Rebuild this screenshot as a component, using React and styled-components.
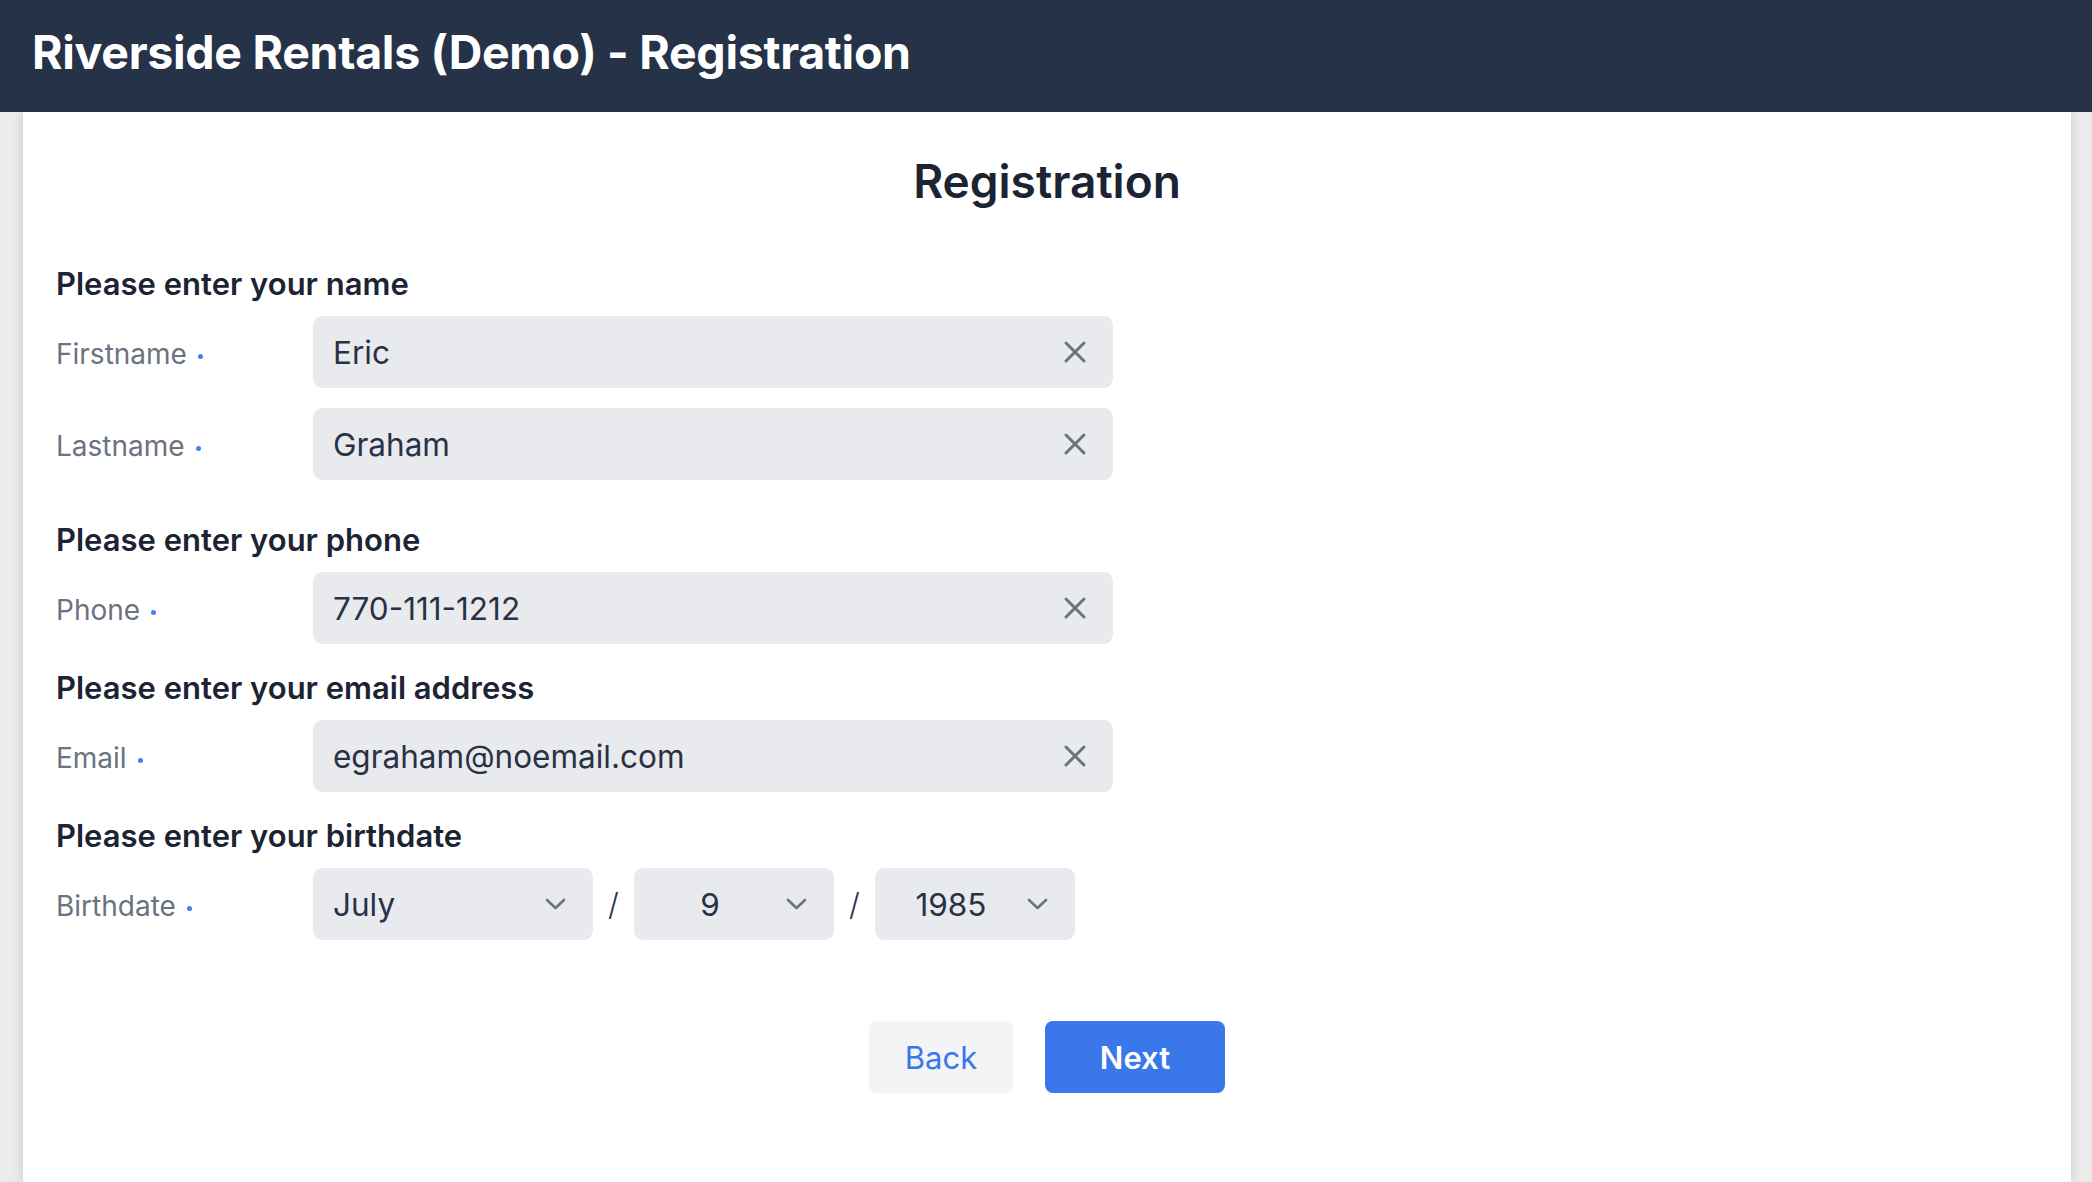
import React from 'react';
import styled, { createGlobalStyle } from 'styled-components';

const GlobalStyle = createGlobalStyle`
  body {
    margin: 0;
    background-color: #ebebec;
    font-family: Inter, "Noto Sans", sans-serif;
  }
`;

const TopBar = styled.header`
  height: 112px;
  box-sizing: border-box;
  background-color: #263248;
  display: flex;
  align-items: center;
  padding: 0 32px 8px;
`;

const AppTitle = styled.h1`
  margin: 0;
  color: #ffffff;
  font-size: 46.5px;
  font-weight: 700;
  letter-spacing: -0.3px;
`;

const Card = styled.main`
  background-color: #ffffff;
  margin: 0 21px 0 23px;
  min-height: calc(100vh - 112px);
  padding: 0 33px 60px;
  box-sizing: border-box;
  box-shadow: 0 0 10px rgba(40, 45, 60, 0.18);
`;

const PageTitle = styled.h2`
  margin: 0;
  padding-top: 43px;
  text-align: center;
  font-size: 46px;
  line-height: 53px;
  font-weight: 600;
  color: #1c2433;
`;

const Section = styled.section`
  margin-top: ${({ $top }) => $top}px;
`;

const SectionHeading = styled.h3`
  margin: 0 0 15px;
  font-size: 31px;
  line-height: 34px;
  font-weight: 600;
  color: #1c2433;
`;

const FieldRow = styled.div`
  display: flex;
  align-items: center;
  height: 72px;
  & + & {
    margin-top: 20px;
  }
`;

const Label = styled.div`
  width: 257px;
  flex-shrink: 0;
  display: flex;
  align-items: center;
  padding-top: 4px;
  font-size: 28px;
  color: #6b7280;
`;

const RequiredDot = styled.span`
  width: 5px;
  height: 5px;
  border-radius: 50%;
  background-color: #3b82f6;
  margin-left: 11px;
  margin-top: 4px;
`;

const InputBox = styled.div`
  width: 800px;
  height: 72px;
  box-sizing: border-box;
  background-color: #e9eaee;
  border-radius: 9px;
  display: flex;
  align-items: center;
  padding: 0 27px 0 20px;
`;

const TextInput = styled.input`
  flex: 1;
  border: none;
  outline: none;
  background: transparent;
  padding: 0;
  font-family: inherit;
  font-size: 31.5px;
  color: #283244;
`;

const ClearButton = styled.button`
  border: none;
  background: none;
  padding: 0;
  display: flex;
  cursor: pointer;
`;

const DateRow = styled.div`
  display: flex;
  align-items: center;
`;

const SelectBox = styled.div`
  width: ${({ $width }) => $width}px;
  height: 72px;
  box-sizing: border-box;
  background-color: #e9eaee;
  border-radius: 9px;
  display: flex;
  align-items: center;
  gap: 20px;
  padding: 0 27px 0 20px;
  cursor: pointer;
`;

const SelectValue = styled.span`
  flex: 1;
  text-align: ${({ $align }) => $align};
  font-size: 31.5px;
  color: #283244;
`;

const Slash = styled.span`
  width: 41px;
  text-align: center;
  font-size: 31px;
  font-weight: 300;
  color: #283244;
`;

const ButtonBar = styled.div`
  display: flex;
  justify-content: center;
  gap: 32px;
  margin-top: 81px;
`;

const Button = styled.button`
  height: 72px;
  min-width: ${({ $primary }) => ($primary ? 180 : 144)}px;
  border: none;
  border-radius: 8px;
  font-family: inherit;
  font-size: 31px;
  font-weight: ${({ $primary }) => ($primary ? 600 : 400)};
  background-color: ${({ $primary }) => ($primary ? '#3a77ea' : '#f3f4f6')};
  color: ${({ $primary }) => ($primary ? '#ffffff' : '#3a77ea')};
  cursor: pointer;
`;

const CloseIcon = () => (
  <svg width="22" height="22" viewBox="0 0 22 22">
    <path d="M2 2 L20 20 M20 2 L2 20" stroke="#6b7280" strokeWidth="3" strokeLinecap="round" />
  </svg>
);

const ChevronIcon = () => (
  <svg width="21" height="12" viewBox="0 0 21 12">
    <path d="M2 2 L10.5 10 L19 2" stroke="#6b7280" strokeWidth="2.6" fill="none" strokeLinecap="round" strokeLinejoin="round" />
  </svg>
);

const sections = [
  {
    heading: 'Please enter your name',
    top: 59,
    fields: [
      { label: 'Firstname', value: 'Eric' },
      { label: 'Lastname', value: 'Graham' },
    ],
  },
  {
    heading: 'Please enter your phone',
    top: 43,
    fields: [{ label: 'Phone', value: '770-111-1212' }],
  },
  {
    heading: 'Please enter your email address',
    top: 27,
    fields: [{ label: 'Email', value: 'egraham@noemail.com' }],
  },
];

const Select = ({ value, width, align }) => (
  <SelectBox $width={width}>
    <SelectValue $align={align}>{value}</SelectValue>
    <ChevronIcon />
  </SelectBox>
);

const App = () => {
  return (
    <>
      <GlobalStyle />
      <TopBar>
        <AppTitle>Riverside Rentals (Demo) - Registration</AppTitle>
      </TopBar>
      <Card>
        <PageTitle>Registration</PageTitle>
        {sections.map((section) => (
          <Section key={section.heading} $top={section.top}>
            <SectionHeading>{section.heading}</SectionHeading>
            {section.fields.map((field) => (
              <FieldRow key={field.label}>
                <Label>
                  {field.label}
                  <RequiredDot />
                </Label>
                <InputBox>
                  <TextInput defaultValue={field.value} />
                  <ClearButton aria-label="Clear">
                    <CloseIcon />
                  </ClearButton>
                </InputBox>
              </FieldRow>
            ))}
          </Section>
        ))}
        <Section $top={27}>
          <SectionHeading>Please enter your birthdate</SectionHeading>
          <FieldRow>
            <Label>
              Birthdate
              <RequiredDot />
            </Label>
            <DateRow>
              <Select value="July" width={280} align="left" />
              <Slash>/</Slash>
              <Select value="9" width={200} align="center" />
              <Slash>/</Slash>
              <Select value="1985" width={200} align="center" />
            </DateRow>
          </FieldRow>
        </Section>
        <ButtonBar>
          <Button>Back</Button>
          <Button $primary>Next</Button>
        </ButtonBar>
      </Card>
    </>
  );
};

export default App;
